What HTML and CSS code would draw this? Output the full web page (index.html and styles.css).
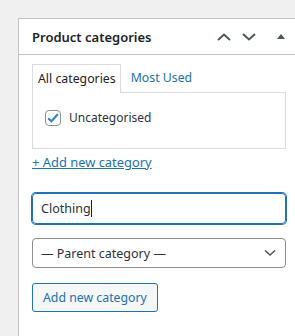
FILE: index.html
```html
<!DOCTYPE html>
<html lang="en">
<head>
  <meta charset="UTF-8">
  <meta name="viewport" content="width=device-width, initial-scale=1.0">
  <title>Product categories</title>
  <link rel="stylesheet" href="styles.css">
</head>
<body>
  <div class="postbox">
    <div class="postbox-header">
      <h2>Product categories</h2>
      <div class="handle-actions">
        <svg class="chev" width="14" height="8" viewBox="0 0 14 8"><path d="M1 7 L7 1.5 L13 7" fill="none" stroke="#50575e" stroke-width="2"/></svg>
        <svg class="chev" width="14" height="8" viewBox="0 0 14 8"><path d="M1 1 L7 6.5 L13 1" fill="none" stroke="#50575e" stroke-width="2"/></svg>
        <svg class="tri" width="8" height="5" viewBox="0 0 8 5"><path d="M4 0 L8 5 L0 5 Z" fill="#50575e"/></svg>
      </div>
    </div>

    <div class="inside">
      <ul class="category-tabs">
        <li class="tab active">All categories</li>
        <li class="tab"><a href="#">Most Used</a></li>
      </ul>
      <div class="tabs-panel">
        <label class="check-row">
          <span class="checkbox">
            <svg width="12" height="10" viewBox="0 0 12 10"><path d="M1.2 5.2 L4.4 8.2 L10.8 1.2" fill="none" stroke="#3582c4" stroke-width="2.2"/></svg>
          </span>
          Uncategorised
        </label>
      </div>

      <a class="add-toggle" href="#">+ Add new category</a>

      <div class="field focused">Clothing<span class="caret"></span></div>

      <div class="field select">
        <span>— Parent category —</span>
        <svg width="12" height="8" viewBox="0 0 12 8"><path d="M1 1.5 L6 6 L11 1.5" fill="none" stroke="#50575e" stroke-width="1.6"/></svg>
      </div>

      <button class="button">Add new category</button>
    </div>
  </div>
</body>
</html>
```

FILE: styles.css
```css
* {
  margin: 0;
  padding: 0;
  box-sizing: border-box;
}

body {
  font-family: "Noto Sans", "Open Sans", sans-serif;
  font-size: 12px;
  color: #1d2327;
  background-color: #f0f0f1;
  padding: 18px 0 0 18px;
  overflow: hidden;
}

/* Caixa principal */
.postbox {
  width: 300px;
  background-color: #fff;
  border: 1px solid #c3c4c7;
  border-right: none;
  min-height: 330px;
}

.postbox-header {
  display: flex;
  align-items: center;
  height: 36px;
  border-bottom: 1px solid #c3c4c7;
  padding-left: 13px;
}

.postbox-header h2 {
  width: 185px;
  font-size: 13px;
  font-weight: 600;
  color: #1d2327;
}

.handle-actions {
  display: flex;
  align-items: center;
}

.chev {
  margin-right: 11px;
}

.tri {
  margin-left: 10px;
}

.inside {
  padding: 9px 13px 0 13px;
  width: 280px;
}

/* Abas */
.category-tabs {
  display: flex;
  list-style: none;
  height: 28px;
}

.tab {
  padding: 5px 5px 0 5px;
  font-size: 12.3px;
}

.tab.active {
  border: 1px solid #dcdcde;
  border-bottom: none;
  background-color: #fff;
  position: relative;
  z-index: 1;
  height: 29px;
  padding-left: 5px;
  padding-right: 4px;
}

.tab a {
  color: #2271b1;
  text-decoration: none;
  margin-left: 5px;
}

.tabs-panel {
  border: 1px solid #dcdcde;
  height: 57px;
  padding: 16px 12px;
}

.check-row {
  display: flex;
  align-items: center;
  gap: 8px;
  font-size: 12px;
  color: #2c3338;
}

.checkbox {
  width: 16px;
  height: 16px;
  border: 1px solid #8c8f94;
  border-radius: 4px;
  display: flex;
  align-items: center;
  justify-content: center;
}

.add-toggle {
  display: inline-block;
  margin-top: 3px;
  font-size: 12.9px;
  color: #2271b1;
  text-decoration: underline;
  line-height: 20px;
}

/* Campos */
.field {
  display: flex;
  align-items: center;
  height: 31px;
  border: 1px solid #8c8f94;
  border-radius: 4px;
  padding: 0 8px;
  font-size: 12.5px;
  color: #2c3338;
}

.field.focused {
  margin-top: 21px;
  border-color: #2271b1;
  box-shadow: 0 0 0 1px #2271b1;
}

.caret {
  display: inline-block;
  width: 1px;
  height: 17px;
  background-color: #1d2327;
}

.field.select {
  margin-top: 14px;
  height: 30px;
  justify-content: space-between;
  padding-right: 9px;
}

.button {
  margin-top: 15px;
  height: 29px;
  padding: 0 10px;
  font-family: inherit;
  font-size: 12.3px;
  color: #2271b1;
  background-color: #f6f7f7;
  border: 1px solid #2271b1;
  border-radius: 3px;
}
```
